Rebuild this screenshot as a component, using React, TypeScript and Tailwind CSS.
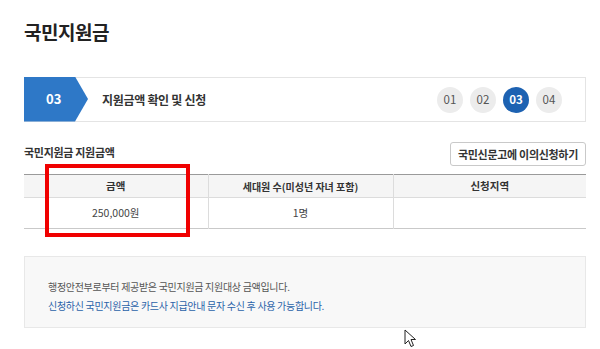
import React from 'react'

const steps = ['01', '02', '03', '04']

function Cursor() {
  return (
    <svg width="13" height="19" viewBox="0 0 13 19" className="absolute left-[404px] top-[329px]">
      <path d="M1 1 L1 15 L4.5 11.5 L7 17.5 L9.5 16.5 L7 10.5 L11.5 10.5 Z" fill="#fff" stroke="#222" strokeWidth="1" strokeLinejoin="round" />
    </svg>
  )
}

export default function App() {
  return (
    <div className="relative w-[600px] h-[349px] bg-white overflow-hidden font-['Noto_Sans_CJK_KR','Noto_Sans',sans-serif] text-[#333]">
      <div className="pl-[24px] pr-[14px] pt-[18px]">
        {/* Page title */}
        <h1 className="text-[19px] font-bold text-[#222] leading-[28px] tracking-[-0.5px]">국민지원금</h1>

        {/* Step bar */}
        <div className="mt-[31px] h-[45px] w-[562px] border border-[#e4e4e4] flex items-center">
          <div className="h-[45px] -ml-px -mt-px w-[65px] shrink-0 bg-[#2e78c7] [clip-path:polygon(0_0,51px_0,64px_50%,51px_100%,0_100%)] flex items-center pl-[22px]">
            <span className="text-white text-[13px] font-bold">03</span>
          </div>
          <span className="ml-[13px] text-[12px] font-bold text-[#333] tracking-[-0.3px]">지원금액 확인 및 신청</span>
          <div className="ml-auto mr-[23px] flex gap-[7px]">
            {steps.map(s => (
              <div
                key={s}
                className={`w-[26px] h-[26px] rounded-full flex items-center justify-center text-[11.5px] ${
                  s === '03' ? 'bg-[#1d62b2] text-white font-bold' : 'bg-[#ececec] text-[#555]'
                }`}
              >
                {s}
              </div>
            ))}
          </div>
        </div>

        {/* Section header */}
        <div className="mt-[20px] flex items-end justify-between">
          <p className="text-[11px] font-bold text-[#333] mb-[6px] tracking-[-0.3px]">국민지원금 지원금액</p>
          <button className="h-[24px] w-[136px] border border-[#c9c9c9] rounded-[3px] bg-white text-[11px] font-bold text-[#333] tracking-[-0.3px]">
            국민신문고에 이의신청하기
          </button>
        </div>

        {/* Table */}
        <div className="relative mt-[8px] w-[562px]">
          <table className="w-full border-collapse text-[10.5px]">
            <thead>
              <tr className="h-[23px] bg-[#f5f5f5] border-t border-[#9a9a9a] border-b border-b-[#dcdcdc]">
                <th className="w-[184px] font-bold text-[#333]">금액</th>
                <th className="w-[185px] font-bold text-[#333] border-l border-[#dcdcdc] text-[10px]">세대원 수(미성년 자녀 포함)</th>
                <th className="font-bold text-[#333] border-l border-[#dcdcdc]">신청지역</th>
              </tr>
            </thead>
            <tbody>
              <tr className="h-[31px] border-b border-[#c9c9c9]">
                <td className="text-center text-[#444]">250,000원</td>
                <td className="text-center text-[#444] border-l border-[#dcdcdc]">1명</td>
                <td className="border-l border-[#dcdcdc]"></td>
              </tr>
            </tbody>
          </table>
          {/* Highlight overlay */}
          <div className="absolute left-[21px] top-[-10px] w-[145px] h-[73px] border-[4px] border-[#f00000]" />
        </div>

        {/* Info box */}
        <div className="mt-[27px] w-[562px] h-[72px] bg-[#f8f8f8] border border-[#e8e8e8] pl-[23px] pt-[20px] text-[10px] leading-[19px] tracking-[-0.3px]">
          <p className="text-[#555]">행정안전부로부터 제공받은 국민지원금 지원대상 금액입니다.</p>
          <p className="text-[#2a62a8]">신청하신 국민지원금은 카드사 지급안내 문자 수신 후 사용 가능합니다.</p>
        </div>
      </div>
      <Cursor />
    </div>
  )
}
